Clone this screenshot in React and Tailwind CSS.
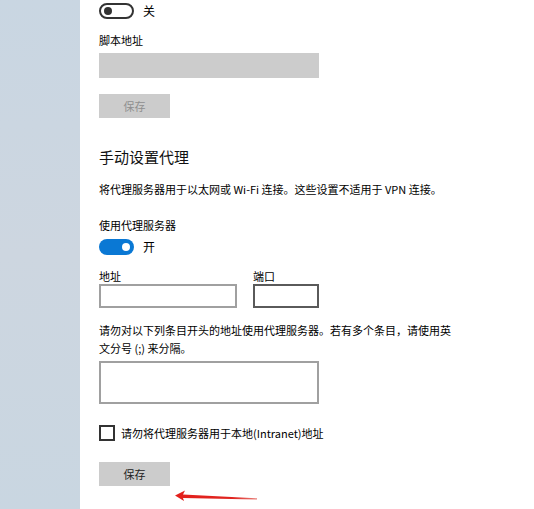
import React from "react";

function Toggle({ on }) {
  if (on) {
    return (
      <div className="w-[35px] h-[16px] rounded-full bg-[#0a78d4] flex items-center justify-end pr-[4px]">
        <div className="w-[8px] h-[8px] rounded-full bg-white" />
      </div>
    );
  }
  return (
    <div className="w-[35px] h-[16px] rounded-full border-2 border-[#333] flex items-center pl-[3px] box-border">
      <div className="w-[8px] h-[8px] rounded-full bg-[#333]" />
    </div>
  );
}

export default function App() {
  return (
    <div className="w-[534px] h-[509px] flex overflow-hidden font-['Noto_Sans_CJK_SC',sans-serif] text-[11px] text-black">
      <div className="w-[80px] h-full bg-gradient-to-b from-[#c9d6e2] via-[#cdd6e0] to-[#c9d6e1]" />
      <div className="relative flex-1 bg-white pl-[19px] pt-[3px] flex flex-col items-start">
        <div className="flex items-center h-[16px]">
          <Toggle on={false} />
          <span className="ml-[9px] text-[12px] leading-[16px]">关</span>
        </div>
        <div className="mt-[13px] leading-[16px] h-[16px]">脚本地址</div>
        <div className="mt-[5px] w-[220px] h-[25px] bg-[#cccccc]" />
        <div className="mt-[16px] w-[71px] h-[24px] bg-[#cccccc] text-[#8f8f8f] flex items-center justify-center">保存</div>
        <div className="mt-[28px] text-[15px] leading-[22px] h-[22px] text-[#111]">手动设置代理</div>
        <div className="mt-[13px] leading-[16px] h-[16px] whitespace-nowrap">将代理服务器用于以太网或 Wi-Fi 连接。这些设置不适用于 VPN 连接。</div>
        <div className="mt-[20px] leading-[16px] h-[16px]">使用代理服务器</div>
        <div className="mt-[6px] flex items-center h-[16px]">
          <Toggle on={true} />
          <span className="ml-[9px] text-[12px] leading-[16px]">开</span>
        </div>
        <div className="mt-[13px] flex gap-[16px]">
          <div className="flex flex-col">
            <div className="leading-[16px] h-[16px]">地址</div>
            <div className="w-[138px] h-[24px] border-2 border-[#a0a0a0] box-border bg-white" />
          </div>
          <div className="flex flex-col">
            <div className="leading-[16px] h-[16px]">端口</div>
            <div className="w-[66px] h-[24px] border-2 border-[#5a5a5a] box-border bg-white" />
          </div>
        </div>
        <div className="mt-[13px] leading-[18px] whitespace-nowrap">
          请勿对以下列条目开头的地址使用代理服务器。若有多个条目，请使用英
          <br />
          文分号 (;) 来分隔。
        </div>
        <div className="mt-[4px] w-[220px] h-[43px] border-2 border-[#a0a0a0] box-border bg-white" />
        <div className="mt-[21px] flex items-center h-[16px]">
          <div className="w-[16px] h-[16px] border-2 border-[#333] box-border bg-white" />
          <span className="ml-[6px] text-[11px] leading-[16px] whitespace-nowrap">请勿将代理服务器用于本地(Intranet)地址</span>
        </div>
        <div className="mt-[21px] w-[71px] h-[24px] bg-[#cccccc] text-[#222] flex items-center justify-center">保存</div>
        <svg className="absolute left-[90px] top-[485px]" width="92" height="20" viewBox="0 0 92 20">
          <defs>
            <linearGradient id="ag" x1="0" y1="0" x2="1" y2="0">
              <stop offset="0" stopColor="#e3201c" />
              <stop offset="0.7" stopColor="#e0241f" />
              <stop offset="1" stopColor="#e8807a" />
            </linearGradient>
          </defs>
          <path d="M5,10.5 L15,5.5 L13,9.5 L87,13.3 L87,14.6 L13,13 L14,16 Z" fill="url(#ag)" />
        </svg>
      </div>
    </div>
  );
}
